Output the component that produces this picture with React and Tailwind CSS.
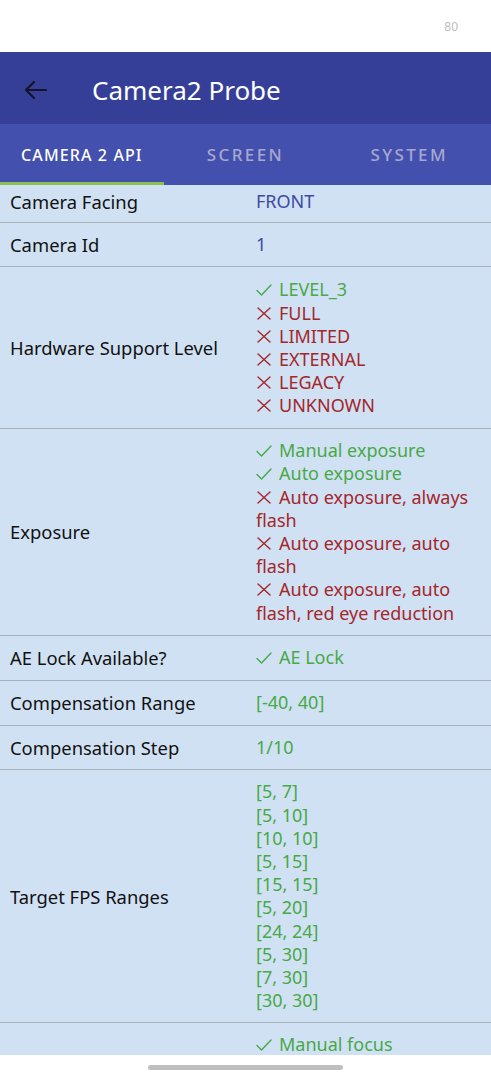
import React from "react";

const GREEN = "text-[#47a947]";
const RED = "text-[#a3272b]";

function Check() {
  return (
    <svg width="16" height="12" viewBox="0 0 16 12" className="inline-block mr-[7px] align-[0px]" fill="none" stroke="currentColor" strokeWidth="1.4" strokeLinecap="round" strokeLinejoin="round">
      <path d="M1 6.5 L5.5 11 L15 1" />
    </svg>
  );
}

function Cross() {
  return (
    <svg width="16" height="13" viewBox="0 0 16 13" className="inline-block mr-[7px] align-[0px]" fill="none" stroke="currentColor" strokeWidth="1.4" strokeLinecap="round">
      <path d="M2 1 L14 12 M14 1 L2 12" />
    </svg>
  );
}

function Item({ ok, children }) {
  return (
    <div className={ok ? GREEN : RED}>
      {ok ? <Check /> : <Cross />}
      {children}
    </div>
  );
}

function Row({ label, children, pad = "py-[10px]" }) {
  return (
    <div className={`flex items-center border-b border-[#a8b0bb] ${pad}`}>
      <div className="w-[256px] shrink-0 pl-[10px] text-[#111111] text-[18.4px]">{label}</div>
      <div className="flex-1 pr-[10px]">{children}</div>
    </div>
  );
}

export default function App() {
  const fps = ["[5, 7]", "[5, 10]", "[10, 10]", "[5, 15]", "[15, 15]", "[5, 20]", "[24, 24]", "[5, 30]", "[7, 30]", "[30, 30]"];
  return (
    <div className="w-[491px] h-[1080px] flex flex-col bg-white overflow-hidden" style={{ fontFamily: '"Noto Sans", sans-serif' }}>
      <div className="h-[52px] shrink-0 bg-white flex items-start justify-end pr-[33px] pt-[18px]">
        <span className="text-[12px] text-[#bdbdbd]">80</span>
      </div>
      <div className="h-[72px] shrink-0 bg-[#353f98] flex items-center pt-[4px]">
        <svg width="24" height="20" viewBox="0 0 24 20" className="ml-[24px] text-[#14142a]" fill="none" stroke="currentColor" strokeWidth="2.2" strokeLinecap="round" strokeLinejoin="round">
          <path d="M22 10 H2 M10 2 L2 10 L10 18" />
        </svg>
        <div className="ml-[44px] text-white text-[26px] leading-none pb-[1px]">Camera2 Probe</div>
      </div>
      <div className="h-[61px] shrink-0 bg-[#4450ae] flex">
        <div className="flex-1 flex flex-col">
          <div className="flex-1 flex items-center justify-center text-white text-[16px] font-medium tracking-[0.07em] pt-[4px]">CAMERA 2 API</div>
          <div className="h-[3px] bg-[#8cc152]" />
        </div>
        <div className="flex-1 flex items-center justify-center text-[#a6a9cc] text-[17px] font-medium tracking-[0.14em] pt-[1px]">SCREEN</div>
        <div className="flex-1 flex items-center justify-center text-[#a6a9cc] text-[17px] font-medium tracking-[0.14em] pt-[1px]">SYSTEM</div>
      </div>
      <div className="flex-1 overflow-hidden bg-[#d1e1f4] text-[18px] leading-[23.2px]">
        <Row label="Camera Facing" pad="pt-[5px] pb-[9px]">
          <div className="text-[#3e4aa3]">FRONT</div>
        </Row>
        <Row label="Camera Id">
          <div className="text-[#3e4aa3]">1</div>
        </Row>
        <Row label="Hardware Support Level" pad="pt-[11px] pb-[10.5px]">
          <Item ok>LEVEL_3</Item>
          <Item>FULL</Item>
          <Item>LIMITED</Item>
          <Item>EXTERNAL</Item>
          <Item>LEGACY</Item>
          <Item>UNKNOWN</Item>
        </Row>
        <Row label="Exposure">
          <Item ok>Manual exposure</Item>
          <Item ok>Auto exposure</Item>
          <Item>Auto exposure, always flash</Item>
          <Item>Auto exposure, auto flash</Item>
          <Item>Auto exposure, auto flash, red eye reduction</Item>
        </Row>
        <Row label="AE Lock Available?" pad="py-[10.5px]">
          <Item ok>AE Lock</Item>
        </Row>
        <Row label="Compensation Range" pad="py-[10.5px]">
          <div className={GREEN}>[-40, 40]</div>
        </Row>
        <Row label="Compensation Step">
          <div className={GREEN}>1/10</div>
        </Row>
        <Row label="Target FPS Ranges">
          {fps.map((f) => (
            <div key={f} className={GREEN}>{f}</div>
          ))}
        </Row>
        <Row label="Focus">
          <Item ok>Manual focus</Item>
          <Item ok>Auto focus</Item>
          <Item>Macro</Item>
          <Item ok>Continuous video</Item>
          <Item ok>Continuous picture</Item>
          <Item>EDOF</Item>
        </Row>
      </div>
      <div className="h-[25px] shrink-0 bg-white flex justify-center pt-[10px]">
        <div className="w-[195px] h-[5px] rounded-full bg-[#bfbfbf]" />
      </div>
    </div>
  );
}
